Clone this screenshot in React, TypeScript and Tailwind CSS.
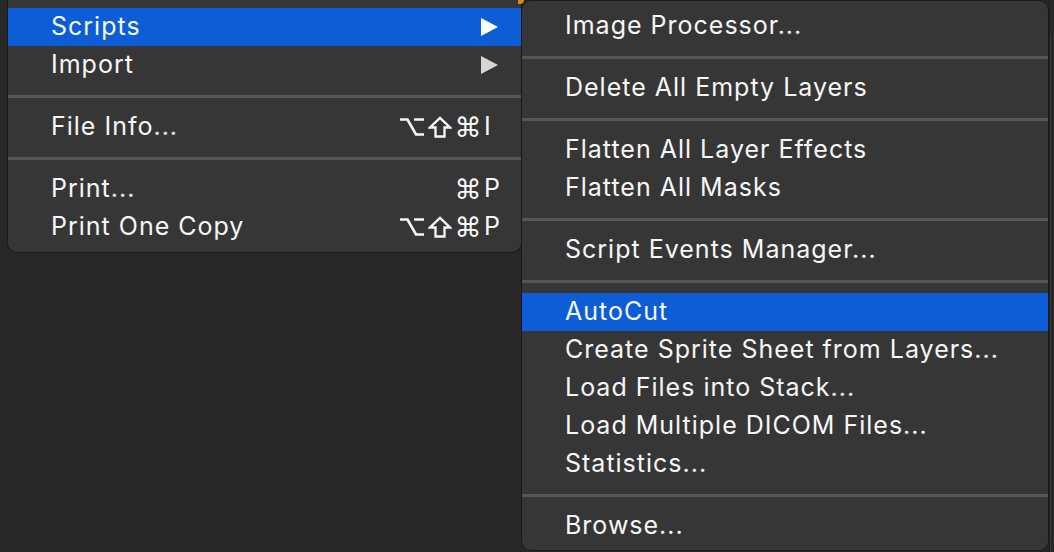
type Item =
  | { kind: "sep" }
  | { kind: "item"; label: string; active?: boolean; arrow?: boolean; mods?: string[]; keyChar?: string };

const leftItems: Item[] = [
  { kind: "item", label: "Scripts", active: true, arrow: true },
  { kind: "item", label: "Import", arrow: true },
  { kind: "sep" },
  { kind: "item", label: "File Info...", mods: ["opt", "shift", "cmd"], keyChar: "I" },
  { kind: "sep" },
  { kind: "item", label: "Print...", mods: ["cmd"], keyChar: "P" },
  { kind: "item", label: "Print One Copy", mods: ["opt", "shift", "cmd"], keyChar: "P" },
];

const rightItems: Item[] = [
  { kind: "item", label: "Image Processor..." },
  { kind: "sep" },
  { kind: "item", label: "Delete All Empty Layers" },
  { kind: "sep" },
  { kind: "item", label: "Flatten All Layer Effects" },
  { kind: "item", label: "Flatten All Masks" },
  { kind: "sep" },
  { kind: "item", label: "Script Events Manager..." },
  { kind: "sep" },
  { kind: "item", label: "AutoCut", active: true },
  { kind: "item", label: "Create Sprite Sheet from Layers..." },
  { kind: "item", label: "Load Files into Stack..." },
  { kind: "item", label: "Load Multiple DICOM Files..." },
  { kind: "item", label: "Statistics..." },
  { kind: "sep" },
  { kind: "item", label: "Browse..." },
];

function Arrow({ active }: { active?: boolean }) {
  return (
    <svg width="17" height="18" viewBox="0 0 17 18">
      <polygon points="0,0 17,9 0,18" fill={active ? "#ffffff" : "#d6d6d6"} />
    </svg>
  );
}

function ModKey({ name }: { name: string }) {
  if (name === "opt") {
    return (
      <svg width="24" height="20" viewBox="0 0 24 20" className="mx-[2px]">
        <path d="M0 2.5 H7.5 L16 17.5 H24 M14 2.5 H24" fill="none" stroke="#f7f7f7" strokeWidth="2.6" />
      </svg>
    );
  }
  if (name === "shift") {
    return (
      <svg width="24" height="22" viewBox="0 0 24 22" className="mx-[2px]">
        <path
          d="M12 1.8 L22 11.5 H16.5 V20.5 H7.5 V11.5 H2 Z"
          fill="none"
          stroke="#f7f7f7"
          strokeWidth="2.3"
          strokeLinejoin="miter"
        />
      </svg>
    );
  }
  return (
    <span className="w-[28px] text-center text-[27px] leading-none font-['DejaVu_Sans',sans-serif] tracking-normal">
      ⌘
    </span>
  );
}

function Shortcut({ mods, keyChar }: { mods: string[]; keyChar: string }) {
  return (
    <div className="flex items-center">
      {mods.map((m, i) => (
        <ModKey key={i} name={m} />
      ))}
      <span className="w-[16px] pl-[2px] text-left tracking-normal">{keyChar}</span>
    </div>
  );
}

function MenuList({ items }: { items: Item[] }) {
  return (
    <>
      {items.map((it, i) =>
        it.kind === "sep" ? (
          <div key={i} className="h-6 flex items-center">
            <div className="h-[3px] w-full bg-[#555555]" />
          </div>
        ) : (
          <div
            key={i}
            className={`h-[38px] flex items-center justify-between pl-[43px] pr-[23px] ${
              it.active ? "bg-[#0c5dd6]" : ""
            }`}
          >
            <span>{it.label}</span>
            {it.arrow && <Arrow active={it.active} />}
            {it.mods && it.keyChar && <Shortcut mods={it.mods} keyChar={it.keyChar} />}
          </div>
        )
      )}
    </>
  );
}

export default function App() {
  return (
    <div className="w-[1054px] h-[552px] bg-[#272727] overflow-hidden flex text-[25px] tracking-[1px] text-[#f7f7f7] font-['Inter',sans-serif] relative">
      <div className="ml-[7px] w-[515px] self-start pt-2 pb-[6px] bg-[#363636] border border-t-0 border-[#1a1a1a] rounded-b-[10px] z-0">
        <MenuList items={leftItems} />
      </div>
      <div className="-ml-px w-[528px] h-[551px] pt-[6px] bg-[#363636] border border-[#1a1a1a] rounded-[10px] z-10 overflow-hidden">
        <MenuList items={rightItems} />
      </div>
      <div className="flex-1 border-l border-[#1c1c1c] pt-[34px]">
        <div className="h-full border-l border-[#3a3a3a]" />
      </div>
      <div className="absolute left-[518px] top-0 w-[6px] h-[4px] bg-[#c98a2e] rounded-br-[4px]" />
    </div>
  );
}
